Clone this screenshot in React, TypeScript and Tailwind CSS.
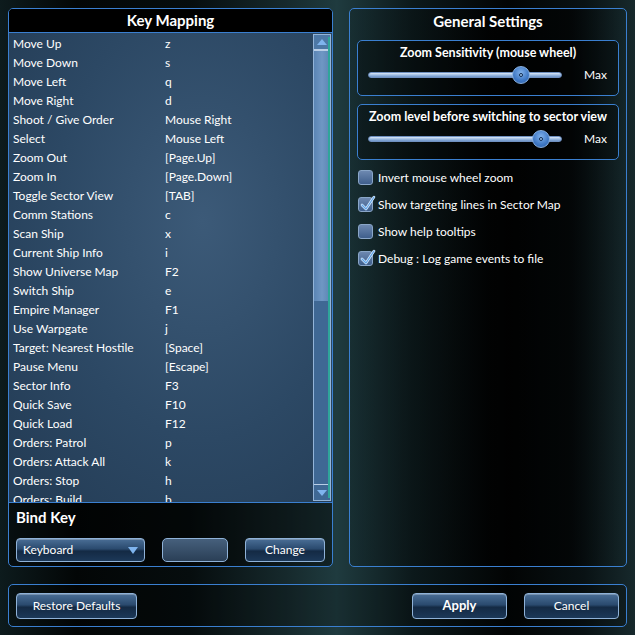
import React from "react";

const rows: [string, string][] = [
  ["Move Up", "z"],
  ["Move Down", "s"],
  ["Move Left", "q"],
  ["Move Right", "d"],
  ["Shoot / Give Order", "Mouse Right"],
  ["Select", "Mouse Left"],
  ["Zoom Out", "[Page.Up]"],
  ["Zoom In", "[Page.Down]"],
  ["Toggle Sector View", "[TAB]"],
  ["Comm Stations", "c"],
  ["Scan Ship", "x"],
  ["Current Ship Info", "i"],
  ["Show Universe Map", "F2"],
  ["Switch Ship", "e"],
  ["Empire Manager", "F1"],
  ["Use Warpgate", "j"],
  ["Target: Nearest Hostile", "[Space]"],
  ["Pause Menu", "[Escape]"],
  ["Sector Info", "F3"],
  ["Quick Save", "F10"],
  ["Quick Load", "F12"],
  ["Orders: Patrol", "p"],
  ["Orders: Attack All", "k"],
  ["Orders: Stop", "h"],
  ["Orders: Build", "b"],
];

const skin =
  "rounded-[4px] border border-[#8fb2d8] bg-[linear-gradient(180deg,#4a6e96_0%,#2a4a6e_45%,#142a44_55%,#1c3858_100%)] text-white text-[12px] shadow-[inset_0_1px_0_rgba(255,255,255,0.25)]";
const btn = "flex items-center justify-center " + skin;

function Slider({ pos }: { pos: number }) {
  return (
    <div className="flex items-center h-[20px]">
      <div className="relative ml-[10px] w-[194px] h-[20px]">
        <div className="absolute left-0 right-0 top-[7px] h-[6px] rounded-full border border-[#6f90c0] bg-[linear-gradient(180deg,#dbe8f7_0%,#9fbde3_50%,#6f94c8_100%)]" />
        <div
          className="absolute top-[1px] w-[18px] h-[18px] -ml-[9px] rounded-full border border-[#88b0e0] bg-[radial-gradient(circle_at_50%_35%,#7fb0ea_0%,#3f78c4_60%,#2a5ca8_100%)] flex items-center justify-center"
          style={{ left: pos }}
        >
          <div className="w-[4px] h-[4px] rounded-full border border-[#0e2a50] bg-[#a9cdf3]" />
        </div>
      </div>
      <span className="ml-auto mr-[11px] text-[12px] text-white">Max</span>
    </div>
  );
}

function Check({ checked, label }: { checked: boolean; label: string }) {
  return (
    <div className="flex items-center h-[27px]">
      <div className="relative w-[15px] h-[15px] rounded-[3px] border border-[#8aa6c8] bg-[linear-gradient(180deg,#6d88b0_0%,#3f5f8c_100%)]">
        {checked && (
          <svg className="absolute -top-[4px] left-[1px]" width="16" height="18" viewBox="0 0 16 18">
            <path d="M2 11 L6 15 L14 3" fill="none" stroke="#d8ecff" strokeWidth="2.6" strokeLinecap="round" strokeLinejoin="round" />
            <path d="M2 11 L6 15 L14 3" fill="none" stroke="#5fa3e8" strokeWidth="1.2" strokeLinecap="round" strokeLinejoin="round" />
          </svg>
        )}
      </div>
      <span className="ml-[5px] text-[12px] text-white">{label}</span>
    </div>
  );
}

export default function App() {
  return (
    <div
      className="w-[635px] h-[635px] p-2 flex flex-col gap-[17px] bg-[linear-gradient(90deg,#0d1b1d_0%,#030606_12%,#060d0e_30%,#16292c_45%,#1f3b3f_53%,#0c191b_65%,#020404_80%,#091214_92%,#17292c_100%)] text-white"
      style={{ fontFamily: "Lato, 'Liberation Sans', sans-serif" }}
    >
      <div className="flex gap-4 h-[559px]">
        {/* Key mapping */}
        <div className="w-[325px] flex flex-col rounded-[5px] border border-[#3a7fd0] bg-black/40 overflow-hidden">
          <div className="h-[24px] flex items-center justify-center border-b border-[#3a7fd0] bg-black text-[15px] font-bold">
            Key Mapping
          </div>
          <div className="relative h-[469px] flex bg-[radial-gradient(ellipse_at_60%_40%,#3c5a78_0%,#2c4864_55%,#233b54_100%)] overflow-hidden">
            <div className="flex-1 pt-[1px] pl-[4px]">
              {rows.map(([a, b]) => (
                <div key={a} className="flex items-center h-[19px] text-[12px] text-white">
                  <span className="w-[152px]">{a}</span>
                  <span>{b}</span>
                </div>
              ))}
            </div>
            <div className="relative w-[18px] mr-[1px] my-[1px] flex flex-col border border-[#93b4d8] bg-[#3f6894]">
              <div className="h-[16px] flex items-center justify-center border-b-2 border-[#b9cee6] bg-[#4d78a6]">
                <div className="w-0 h-0 border-l-[5px] border-r-[5px] border-b-[6px] border-l-transparent border-r-transparent border-b-[#7fb4ee]" />
              </div>
              <div className="h-[250px] bg-[linear-gradient(90deg,#5b85b4_0%,#6f97c4_50%,#5b85b4_100%)]" />
              <div className="flex-1" />
              <div className="h-[16px] flex items-center justify-center border-t border-[#b9cee6] bg-[#3f6894]">
                <div className="w-0 h-0 border-l-[5px] border-r-[5px] border-t-[6px] border-l-transparent border-r-transparent border-t-[#7fb4ee]" />
              </div>
              <div className="absolute right-0 top-[2px] bottom-[2px] w-[2px] bg-[#2fa59a]" />
            </div>
          </div>
          <div className="flex-1 border-t border-[#3a7fd0] px-[7px] pt-[5px]">
            <div className="text-[15px] font-bold leading-[18px]">Bind Key</div>
            <div className="flex items-center mt-[12px] h-[24px]">
              <div className={skin + " flex items-center justify-between w-[129px] h-[24px] pl-[6px] pr-[6px]"}>
                <span>Keyboard</span>
                <div className="w-0 h-0 border-l-[5px] border-r-[5px] border-t-[7px] border-l-transparent border-r-transparent border-t-[#7fb4ee]" />
              </div>
              <div className="ml-[17px] w-[66px] h-[24px] rounded-[5px] border border-[#8fb2d8] bg-[linear-gradient(180deg,#46607c_0%,#2a3f56_100%)]" />
              <div className={btn + " ml-[17px] w-[80px] h-[24px]"}>Change</div>
            </div>
          </div>
        </div>

        {/* General settings */}
        <div className="w-[278px] flex flex-col rounded-[5px] border border-[#3a7fd0] bg-[linear-gradient(90deg,rgba(20,40,44,0.5)_0%,rgba(0,0,0,0.7)_50%,rgba(0,0,0,0.6)_80%,rgba(20,40,44,0.4)_100%)] px-[7px]">
          <div className="h-[24px] flex items-center justify-center text-[15px] font-bold">
            General Settings
          </div>
          <div className="mt-[7px] h-[56px] rounded-[5px] border border-[#3a7fd0] bg-black/30 pt-[3px]">
            <div className="text-center text-[12.5px] font-bold leading-[18px]">Zoom Sensitivity (mouse wheel)</div>
            <div className="mt-[3px]">
              <Slider pos={153} />
            </div>
          </div>
          <div className="mt-[8px] h-[56px] rounded-[5px] border border-[#3a7fd0] bg-black/30 pt-[3px]">
            <div className="text-center text-[12.5px] font-bold leading-[18px] whitespace-nowrap">Zoom level before switching to sector view</div>
            <div className="mt-[3px]">
              <Slider pos={173} />
            </div>
          </div>
          <div className="mt-[4px] pl-[1px]">
            <Check checked={false} label="Invert mouse wheel zoom" />
            <Check checked={true} label="Show targeting lines in Sector Map" />
            <Check checked={false} label="Show help tooltips" />
            <Check checked={true} label="Debug : Log game events to file" />
          </div>
        </div>
      </div>

      {/* Bottom bar */}
      <div className="h-[43px] flex items-center px-[7px] rounded-[5px] border border-[#3a7fd0] bg-black/20">
        <div className={btn + " w-[121px] h-[26px]"}>Restore Defaults</div>
        <div className={btn + " ml-auto w-[95px] h-[26px] font-bold text-[13px]"}>Apply</div>
        <div className={btn + " ml-[17px] w-[95px] h-[26px]"}>Cancel</div>
      </div>
    </div>
  );
}
